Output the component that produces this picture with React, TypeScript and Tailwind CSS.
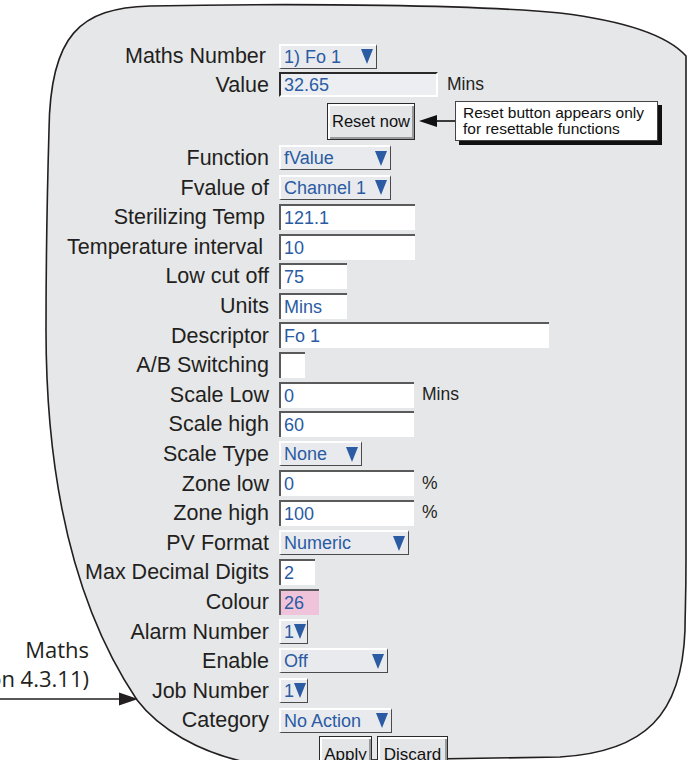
import React from 'react'

const BLUE = 'text-[#2a5ba3]'

function Arrow() {
  return (
    <svg width="12" height="15" viewBox="0 0 12 15" className="shrink-0">
      <path d="M0 0 H12 L6 15 Z" fill="#2a5ba3" />
    </svg>
  )
}

function Dropdown({ w, value }: { w: string; value: string }) {
  return (
    <div
      className={`${w} h-[25px] flex items-center justify-between pl-[3px] pr-[3px] bg-[#e9eaed] border-t-2 border-l-2 border-white border-r-[1.5px] border-b-[1.5px] border-r-[#4a4a4a] border-b-[#4a4a4a] ${BLUE} text-[18px] leading-none`}
    >
      <span className="whitespace-nowrap">{value}</span>
      <Arrow />
    </div>
  )
}

function Field({ w, value, bg = 'bg-white' }: { w: string; value?: string; bg?: string }) {
  return (
    <div
      className={`${w} ${bg} h-[26px] flex items-center pl-[3px] border-t-2 border-l-2 border-[#5a5a5a] ${BLUE} text-[18px] leading-none`}
    >
      {value}
    </div>
  )
}

function Row({
  label,
  h = 'h-[29.6px]',
  pr = 'pr-0',
  children,
}: {
  label: string
  h?: string
  pr?: string
  children?: React.ReactNode
}) {
  return (
    <div className={`flex items-center ${h}`}>
      <div className={`w-[269px] ${pr} pt-[2px] text-right text-[21.5px] text-[#231f20] whitespace-nowrap leading-none`}>
        {label}
      </div>
      <div className="ml-[10px] flex items-center">{children}</div>
    </div>
  )
}

function Unit({ text, ml }: { text: string; ml: string }) {
  return <span className={`${ml} text-[17.5px] text-[#231f20] leading-none`}>{text}</span>
}

const btn =
  'bg-[#e4e5e7] border border-[#2a2a2a] shadow-[inset_2px_2px_0_#ffffff,inset_-2px_-2px_0_#9a9a9a] text-[#111] leading-none'

export default function App() {
  return (
    <div className="relative w-[687px] h-[760px] overflow-hidden bg-white font-['Liberation_Sans',Arial,sans-serif]">
      <svg className="absolute inset-0" width="687" height="760" viewBox="0 0 687 760">
        <path
          d="M 150 6 C 300 3, 480 5, 560 13 C 625 21, 668 36, 686 56 L 686 560 C 686 600, 685 615, 685 630 C 682 715, 645 752, 560 757 L 245 762 C 200 752, 160 730, 137 700 C 70 600, 46 470, 46 330 C 46 270, 47 200, 49 130 C 50 35, 80 8, 150 6 Z"
          fill="#e6e7e9"
          stroke="#231f20"
          strokeWidth="1.6"
        />
      </svg>

      {/* annotation on the left */}
      <div className="absolute left-[-300px] top-[635px] w-[389px] text-right text-[22px] leading-[29px] text-[#231f20] font-['Open_Sans',sans-serif] whitespace-nowrap">
        <div>Maths</div>
        <div>(see section 4.3.11)</div>
      </div>
      <svg className="absolute left-0 top-[691px]" width="140" height="16" viewBox="0 0 140 16">
        <line x1="0" y1="8" x2="124" y2="8" stroke="#231f20" strokeWidth="1.6" />
        <path d="M119 1.5 L138 8 L119 14.5 Z" fill="#231f20" />
      </svg>

      <div className="relative pt-[42px]">
        <Row label="Maths Number" h="h-[28px]" pr="pr-[3px]">
          <Dropdown w="w-[98px]" value="1) Fo 1" />
        </Row>
        <Row label="Value" h="h-[29px]">
          <div
            className={`w-[159px] h-[25px] flex items-center pl-[3px] bg-[#eceef1] border-t-2 border-l-2 border-[#2a2a2a] border-r-2 border-b-2 border-r-white border-b-white ${BLUE} text-[18px] leading-none`}
          >
            32.65
          </div>
          <Unit text="Mins" ml="ml-[9px]" />
        </Row>

        <div className="flex items-center h-[44px] pl-[327px]">
          <div className={`${btn} w-[88px] h-[37px] flex items-center justify-center text-[16.5px]`}>Reset now</div>
          <svg className="ml-[3px]" width="37" height="14" viewBox="0 0 37 14">
            <line x1="14" y1="7" x2="37" y2="7" stroke="#111" strokeWidth="1.6" />
            <path d="M1 7 L19 1 L19 13 Z" fill="#111" />
          </svg>
          <div className="w-[203px] h-[40px] bg-white border border-[#444] shadow-[4px_4px_0_#111] pl-[7px] pt-[3px] text-[15.5px] leading-[16px] text-[#111] whitespace-nowrap">
            <div>Reset button appears only</div>
            <div>for resettable functions</div>
          </div>
        </div>

        <Row label="Function">
          <Dropdown w="w-[112px]" value="fValue" />
        </Row>
        <Row label="Fvalue of">
          <Dropdown w="w-[112px]" value="Channel 1" />
        </Row>
        <Row label="Sterilizing Temp" pr="pr-[4px]">
          <Field w="w-[136px]" value="121.1" />
        </Row>
        <Row label="Temperature interval" pr="pr-[6px]">
          <Field w="w-[136px]" value="10" />
        </Row>
        <Row label="Low cut off">
          <Field w="w-[68px]" value="75" />
        </Row>
        <Row label="Units">
          <Field w="w-[68px]" value="Mins" />
        </Row>
        <Row label="Descriptor">
          <Field w="w-[270px]" value="Fo 1" />
        </Row>
        <Row label="A/B Switching">
          <Field w="w-[26px]" />
        </Row>
        <Row label="Scale Low">
          <Field w="w-[135px]" value="0" />
          <Unit text="Mins" ml="ml-[8px]" />
        </Row>
        <Row label="Scale high">
          <Field w="w-[135px]" value="60" />
        </Row>
        <Row label="Scale Type">
          <Dropdown w="w-[83px]" value="None" />
        </Row>
        <Row label="Zone low">
          <Field w="w-[135px]" value="0" />
          <Unit text="%" ml="ml-[8px]" />
        </Row>
        <Row label="Zone high">
          <Field w="w-[135px]" value="100" />
          <Unit text="%" ml="ml-[8px]" />
        </Row>
        <Row label="PV Format">
          <Dropdown w="w-[130px]" value="Numeric" />
        </Row>
        <Row label="Max Decimal Digits">
          <Field w="w-[36px]" value="2" />
        </Row>
        <Row label="Colour">
          <Field w="w-[40px]" value="26" bg="bg-[#efc3da]" />
        </Row>
        <Row label="Alarm Number">
          <Dropdown w="w-[29px]" value="1" />
        </Row>
        <Row label="Enable">
          <Dropdown w="w-[109px]" value="Off" />
        </Row>
        <Row label="Job Number">
          <Dropdown w="w-[29px]" value="1" />
        </Row>
        <Row label="Category">
          <Dropdown w="w-[113px]" value="No Action" />
        </Row>

        <div className="flex gap-[5px] pl-[319px] pt-[1px]">
          <div className={`${btn} w-[53px] h-[32px] pt-[9px] text-center text-[17px]`}>Apply</div>
          <div className={`${btn} w-[71px] h-[32px] pt-[9px] text-center text-[17px]`}>Discard</div>
        </div>
      </div>
    </div>
  )
}
